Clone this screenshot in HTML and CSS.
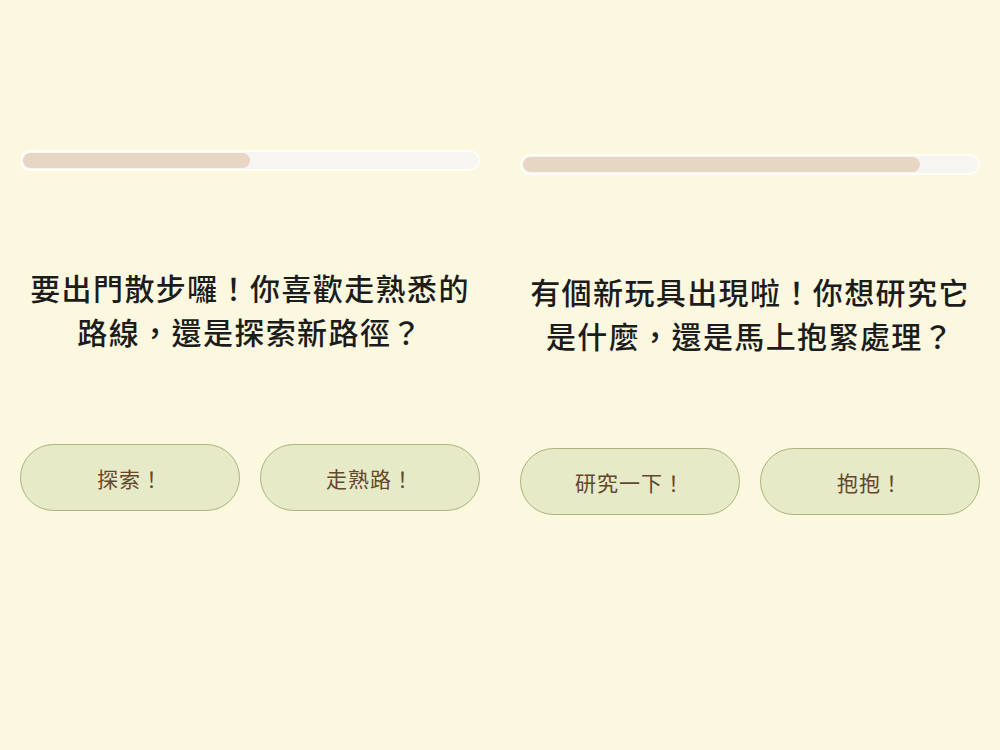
FILE: index.html
```html
<!DOCTYPE html>
<html lang="zh-Hant">
<head>
    <meta charset="UTF-8">
    <title>寵物性格測驗</title>
    <link rel="stylesheet" href="styles.css">
</head>
<body>
<div class="stage">
    <div class="quiz">
        <div class="progress">
            <div class="progress-fill" style="width: 50%"></div>
        </div>
        <p class="question">要出門散步囉！你喜歡走熟悉的路線，還是探索新路徑？</p>
        <div class="answers">
            <button class="answer">探索！</button>
            <button class="answer">走熟路！</button>
        </div>
    </div>

    <div class="quiz quiz-enter">
        <div class="progress">
            <div class="progress-fill" style="width: 87.5%"></div>
        </div>
        <p class="question">有個新玩具出現啦！你想研究它是什麼，還是馬上抱緊處理？</p>
        <div class="answers">
            <button class="answer">研究一下！</button>
            <button class="answer">抱抱！</button>
        </div>
    </div>
</div>
</body>
</html>
```

FILE: styles.css
```css
* {
    margin: 0;
    padding: 0;
    box-sizing: border-box;
}

body {
    background-color: #fbf8df;
    font-family: "Noto Sans CJK TC", "Noto Sans", sans-serif;
    color: #1c1c1c;
}

.stage {
    display: flex;
    align-items: flex-start;
    gap: 40px;
    padding: 150px 20px 0;
}

.quiz {
    width: 460px;
    display: flex;
    flex-direction: column;
}

.quiz-enter {
    margin-top: 4px;
}

.progress {
    height: 21px;
    padding: 3px;
    border-radius: 11px;
    background-color: #f7f5f1;
    box-shadow: inset 0 0 0 2px #fffdf6;
}

.progress-fill {
    height: 100%;
    border-radius: 8px;
    background-color: #e8d6c4;
}

.question {
    margin: 94px 0 0;
    font-size: 30px;
    font-weight: 500;
    line-height: 44px;
    letter-spacing: 1.4px;
    text-align: center;
}

.answers {
    display: flex;
    gap: 20px;
    margin-top: 91px;
}

.answer {
    flex: 1;
    height: 67px;
    border: 1.5px solid #abb47c;
    border-radius: 34px;
    background-color: #e6eac6;
    color: #65472c;
    font-family: inherit;
    font-size: 21px;
    letter-spacing: 1px;
}
```
